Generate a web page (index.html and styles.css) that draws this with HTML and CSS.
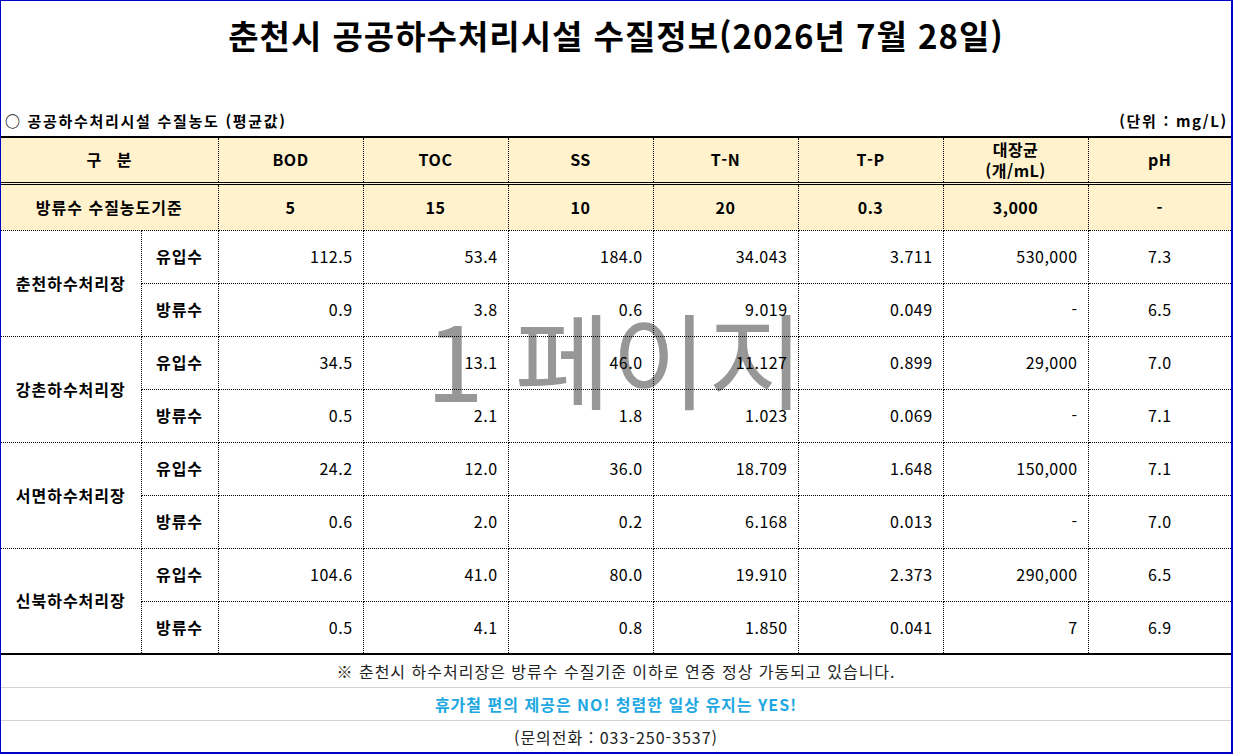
FILE: index.html
```html
<!DOCTYPE html>
<html lang="ko">
<head>
<meta charset="utf-8">
<title>춘천시 공공하수처리시설 수질정보</title>
<link rel="stylesheet" href="styles.css">
</head>
<body>
<div class="page">
  <div class="watermark">1 페이지</div>
  <div class="title">춘천시 공공하수처리시설 수질정보(2026년 7월 28일)</div>
  <div class="caption">
    <span>○ 공공하수처리시설 수질농도 (평균값)</span>
    <span>(단위 : mg/L)</span>
  </div>
  <table class="grid">
    <colgroup>
      <col class="c-name"><col class="c-sub">
      <col class="c-val"><col class="c-val"><col class="c-val"><col class="c-val"><col class="c-val"><col class="c-val">
      <col class="c-last">
    </colgroup>
    <thead>
      <tr class="head">
        <th colspan="2">구&nbsp;&nbsp;&nbsp;분</th>
        <th>BOD</th><th>TOC</th><th>SS</th><th>T-N</th><th>T-P</th>
        <th class="two">대장균<br>(개/mL)</th>
        <th>pH</th>
      </tr>
      <tr class="std">
        <th colspan="2">방류수 수질농도기준</th>
        <th>5</th><th>15</th><th>10</th><th>20</th><th>0.3</th><th>3,000</th><th>-</th>
      </tr>
    </thead>
    <tbody>
      <tr>
        <th class="name" rowspan="2">춘천하수처리장</th>
        <th class="sub">유입수</th>
        <td>112.5</td><td>53.4</td><td>184.0</td><td>34.043</td><td>3.711</td><td>530,000</td><td class="ph">7.3</td>
      </tr>
      <tr>
        <th class="sub">방류수</th>
        <td>0.9</td><td>3.8</td><td>0.6</td><td>9.019</td><td>0.049</td><td>-</td><td class="ph">6.5</td>
      </tr>
      <tr>
        <th class="name" rowspan="2">강촌하수처리장</th>
        <th class="sub">유입수</th>
        <td>34.5</td><td>13.1</td><td>46.0</td><td>11.127</td><td>0.899</td><td>29,000</td><td class="ph">7.0</td>
      </tr>
      <tr>
        <th class="sub">방류수</th>
        <td>0.5</td><td>2.1</td><td>1.8</td><td>1.023</td><td>0.069</td><td>-</td><td class="ph">7.1</td>
      </tr>
      <tr>
        <th class="name" rowspan="2">서면하수처리장</th>
        <th class="sub">유입수</th>
        <td>24.2</td><td>12.0</td><td>36.0</td><td>18.709</td><td>1.648</td><td>150,000</td><td class="ph">7.1</td>
      </tr>
      <tr>
        <th class="sub">방류수</th>
        <td>0.6</td><td>2.0</td><td>0.2</td><td>6.168</td><td>0.013</td><td>-</td><td class="ph">7.0</td>
      </tr>
      <tr>
        <th class="name" rowspan="2">신북하수처리장</th>
        <th class="sub">유입수</th>
        <td>104.6</td><td>41.0</td><td>80.0</td><td>19.910</td><td>2.373</td><td>290,000</td><td class="ph">6.5</td>
      </tr>
      <tr class="last">
        <th class="sub">방류수</th>
        <td>0.5</td><td>4.1</td><td>0.8</td><td>1.850</td><td>0.041</td><td>7</td><td class="ph">6.9</td>
      </tr>
    </tbody>
  </table>
  <div class="foot">
    <div class="foot-row note">※ 춘천시 하수처리장은 방류수 수질기준 이하로 연중 정상 가동되고 있습니다.</div>
    <div class="foot-row slogan">휴가철 편의 제공은 NO! 청렴한 일상 유지는 YES!</div>
    <div class="foot-row contact">(문의전화 : 033-250-3537)</div>
  </div>
</div>
</body>
</html>
```

FILE: styles.css
```css
* { box-sizing: border-box; }
html, body { margin: 0; padding: 0; background: #fff; }
body {
  font-family: "Noto Sans CJK KR", "Noto Sans", sans-serif;
  color: #000;
}
.page {
  position: relative;
  width: 1233px;
  height: 754px;
  border-top: 1px solid #0000c8;
  border-left: 1px solid #0000c8;
  border-right: 2px solid #0000c8;
  border-bottom: 2px solid #0000c8;
  overflow: hidden;
}
.watermark {
  position: absolute;
  left: 425px;
  top: 286px;
  font-size: 104px;
  line-height: 140px;
  color: #979797;
  font-weight: 400;
  white-space: nowrap;
  z-index: 0;
  letter-spacing: 1px;
}
.title {
  height: 67px;
  display: flex;
  align-items: center;
  justify-content: center;
  font-size: 33px;
  font-weight: 700;
  letter-spacing: 1px;
}
.caption {
  height: 68px;
  display: flex;
  justify-content: space-between;
  align-items: flex-end;
  padding: 0 3px 5px 4px;
  font-size: 15px;
  font-weight: 700;
  line-height: 20px;
  letter-spacing: 1.7px;
}
.grid {
  position: relative;
  z-index: 1;
  width: 1230px;
  table-layout: fixed;
  border-collapse: collapse;
  font-size: 16px;
}
.c-name { width: 140px; }
.c-sub { width: 77px; }
.c-val { width: 145px; }
.c-last { width: 143px; }
.grid th, .grid td {
  border: 1px dotted #000;
  padding: 0;
  line-height: 19px;
}
.grid tr > :first-child { border-left: none; }
.grid tr > :last-child { border-right: none; }
.grid th { font-weight: 700; text-align: center; letter-spacing: 1px; }
.grid td {
  text-align: right;
  padding-right: 10px;
  font-weight: 400;
  letter-spacing: 0.5px;
}
.grid td.ph { text-align: center; padding-right: 0; }
.head th {
  height: 46px;
  background: #fff2cc;
  border-top: 2px solid #000;
  border-bottom: 3px double #000;
  letter-spacing: 0.5px;
}
.head th.two { line-height: 21px; }
.std th {
  height: 47px;
  background: #fff2cc;
  letter-spacing: 0.5px;
}
.std th:first-child { letter-spacing: 1px; }
tbody tr { height: 53px; }
tr.last > *, tbody tr:nth-last-child(2) th.name { border-bottom: 2px solid #000; }
.foot {
  position: relative;
  z-index: 1;
  display: flex;
  flex-direction: column;
}
.foot-row {
  display: flex;
  align-items: center;
  justify-content: center;
  font-size: 16px;
  line-height: 20px;
  letter-spacing: 1px;
}
.note { height: 32px; color: #222; }
.slogan {
  height: 33px;
  border-top: 1px solid #d4d4d4;
  color: #1ea8e2;
  font-weight: 700;
}
.contact {
  height: 32px;
  border-top: 1px solid #d4d4d4;
  color: #222;
}
```
